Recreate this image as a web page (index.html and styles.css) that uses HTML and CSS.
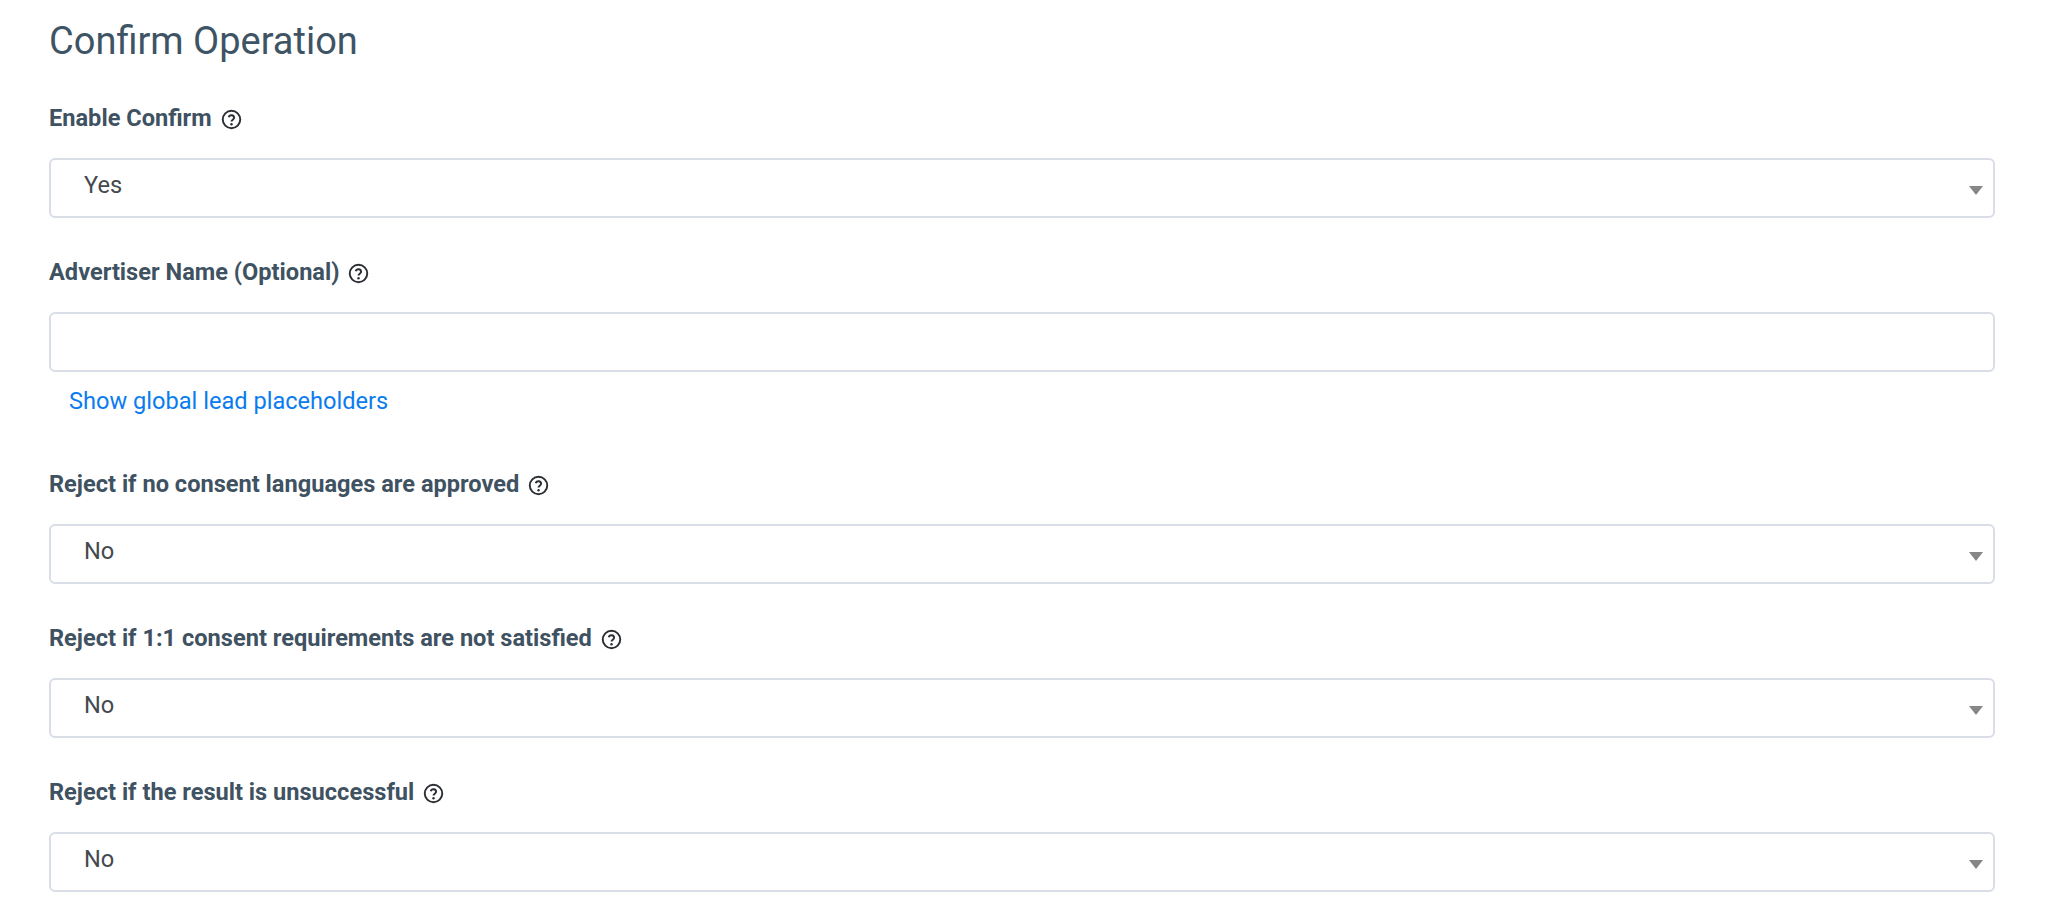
FILE: index.html
```html
<!DOCTYPE html>
<html lang="en">
<head>
  <meta charset="UTF-8" />
  <title>Confirm Operation</title>
  <link rel="stylesheet" href="styles.css">
</head>
<body>
  <svg width="0" height="0" class="icon-defs">
    <symbol id="help" viewBox="0 0 24 24">
      <circle cx="12" cy="12" r="10" fill="none" stroke="currentColor" stroke-width="2.2"/>
      <path d="M8.9 9.4a3.1 3.1 0 0 1 6.1.6c0 2-3 2.6-3 4.4" fill="none" stroke="currentColor" stroke-width="2.2"/>
      <circle cx="12" cy="17.4" r="1.4" fill="currentColor"/>
    </symbol>
  </svg>

  <h2 class="title">Confirm Operation</h2>

  <div class="field">
    <label class="field-label">Enable Confirm <svg class="help"><use href="#help"/></svg></label>
    <div class="select-box">
      <select><option>Yes</option><option>No</option></select>
    </div>
  </div>

  <div class="field field-link">
    <label class="field-label">Advertiser Name (Optional) <svg class="help"><use href="#help"/></svg></label>
    <input class="text-input" type="text" />
    <a href="#" class="placeholder-link">Show global lead placeholders</a>
  </div>

  <div class="field">
    <label class="field-label">Reject if no consent languages are approved <svg class="help"><use href="#help"/></svg></label>
    <div class="select-box">
      <select><option>No</option><option>Yes</option></select>
    </div>
  </div>

  <div class="field">
    <label class="field-label">Reject if 1:1 consent requirements are not satisfied <svg class="help"><use href="#help"/></svg></label>
    <div class="select-box">
      <select><option>No</option><option>Yes</option></select>
    </div>
  </div>

  <div class="field">
    <label class="field-label">Reject if the result is unsuccessful <svg class="help"><use href="#help"/></svg></label>
    <div class="select-box">
      <select><option>No</option><option>Yes</option></select>
    </div>
  </div>
</body>
</html>
```

FILE: styles.css
```css
html, body {
  height: 913px;
  overflow: hidden;
}

body {
  margin: 0;
  padding: 0 53px 0 49px;
  background: #fff;
  font-family: Roboto, sans-serif;
  color: #3f5262;
}

.icon-defs {
  position: absolute;
}

.title {
  margin: 0;
  padding-top: 17px;
  height: 98px;
  box-sizing: border-box;
  font-size: 38px;
  line-height: 48px;
  font-weight: 400;
  color: #3e5464;
}

.field {
  height: 154px;
}

.field-link {
  height: 212px;
}

.field-label {
  display: flex;
  align-items: center;
  height: 40px;
  margin-bottom: 20px;
  font-size: 23.6px;
  font-weight: 700;
  white-space: pre;
}

.help {
  width: 21px;
  height: 21px;
  margin-left: 3px;
  margin-top: 2px;
  color: #2b2f33;
}

.select-box {
  position: relative;
}

.select-box::after {
  content: "";
  position: absolute;
  right: 12px;
  top: 28px;
  border-left: 7.5px solid transparent;
  border-right: 7.5px solid transparent;
  border-top: 9px solid #868686;
}

select,
.text-input {
  display: block;
  width: 100%;
  height: 60px;
  box-sizing: border-box;
  border: 2px solid #d9dee6;
  border-radius: 6px;
  background: #fff;
  font-family: Roboto, sans-serif;
  font-size: 23.6px;
  color: #44494e;
}

select {
  appearance: none;
  padding: 0 0 6px 33px;
}

.placeholder-link {
  display: block;
  margin: 15px 0 0 20px;
  font-size: 23.6px;
  line-height: 28px;
  color: #0a7cf0;
  text-decoration: none;
}
```
